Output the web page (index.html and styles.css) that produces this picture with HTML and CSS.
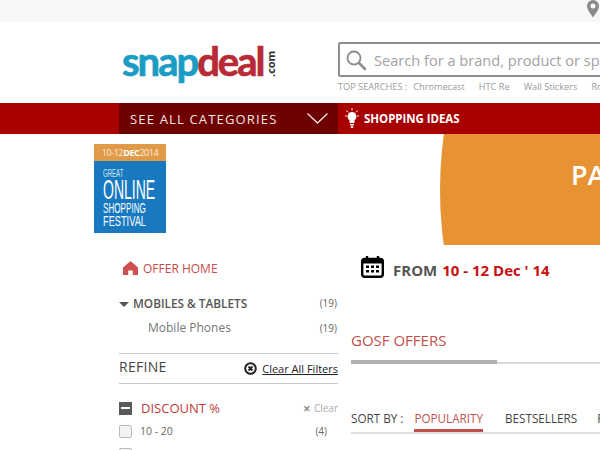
FILE: index.html
```html
<!DOCTYPE html>
<html lang="en">
<head>
    <meta charset="UTF-8">
    <title>Snapdeal GOSF Offers</title>
    <link rel="stylesheet" href="styles.css">
</head>
<body>
    <div class="top-bar">
        <svg class="pin" width="14" height="18" viewBox="0 0 14 18"><path fill="#8a8a8a" fill-rule="evenodd" d="M7 0a6 6 0 0 1 6 6c0 4-4 8-6 11.500C5 14 1 10 1 6a6 6 0 0 1 6-6zm0 3.500a2.500 2.500 0 1 0 0 5 2.500 2.500 0 0 0 0-5z"/></svg>
    </div>

    <div class="header">
        <div class="logo">
            <span class="logo-snap">snap</span><span class="logo-deal">deal</span><span class="logo-com">.com</span>
        </div>
        <div class="search">
            <div class="search-box">
                <svg width="22" height="22" viewBox="0 0 22 22"><circle cx="9" cy="9" r="6.500" fill="none" stroke="#8c8c8c" stroke-width="1.800"/><path d="M14 14l6 6" stroke="#8c8c8c" stroke-width="2.600" stroke-linecap="round"/></svg>
                <span class="search-text">Search for a brand, product or specific item</span>
            </div>
            <div class="top-searches">
                <span class="ts-label">TOP SEARCHES :</span>
                <span>Chromecast</span>
                <span>HTC Re</span>
                <span>Wall Stickers</span>
                <span>Ro</span>
            </div>
        </div>
    </div>

    <div class="nav">
        <div class="categories">
            <span>SEE ALL CATEGORIES</span>
            <svg width="21" height="11" viewBox="0 0 21 11"><path d="M.5.500l10 9.500 10-9.500" fill="none" stroke="#f3e3e3" stroke-width="1.300"/></svg>
        </div>
        <div class="ideas">
            <svg width="14" height="22" viewBox="0 0 14 22"><path fill="#fff" d="M7 4a4.500 4.500 0 0 1 2.500 8.200V15h-5v-2.800A4.500 4.500 0 0 1 7 4zM5 16h4v1.500H5zM5.800 18.300h2.400V20H5.800z"/><path d="M7 0v2.500M1.500 2.500l1.500 1.800M12.500 2.500L11 4.300M0 8h1.800M12.200 8H14" stroke="#fff" stroke-width="1"/></svg>
            <span>SHOPPING IDEAS</span>
        </div>
    </div>

    <div class="main">
        <div class="sidebar">
            <div class="gosf-badge">
                <div class="gosf-date">10-12<b>DEC</b>2014</div>
                <div class="gosf-name">
                    <div class="gosf-great">GREAT</div>
                    <div class="gosf-online">ONLINE</div>
                    <div class="gosf-shopping">SHOPPING</div>
                    <div class="gosf-festival">FESTIVAL</div>
                </div>
            </div>

            <div class="side-inner">
                <div class="offer-home">
                    <svg width="15" height="14" viewBox="0 0 15 14"><path fill="#cf5050" d="M7.500 0L15 6.500V14H9.800V9.500H5.200V14H0V6.500z"/></svg>
                    <span>OFFER HOME</span>
                </div>

                <div class="cat-row cat-main">
                    <span><i class="caret"></i>MOBILES &amp; TABLETS</span>
                    <span class="count">(19)</span>
                </div>
                <div class="cat-row cat-sub">
                    <span>Mobile Phones</span>
                    <span class="count">(19)</span>
                </div>

                <div class="refine">
                    <span class="refine-title">REFINE</span>
                    <span class="clear-all">
                        <svg width="13" height="13" viewBox="0 0 13 13"><circle cx="6.500" cy="6.500" r="5.300" fill="none" stroke="#222" stroke-width="2"/><path d="M4.500 4.500l4 4M8.500 4.500l-4 4" stroke="#222" stroke-width="1.800"/></svg>
                        <u>Clear All Filters</u>
                    </span>
                </div>

                <div class="filter-head">
                    <i class="minus-box"></i>
                    <span class="filter-name">DISCOUNT %</span>
                    <span class="filter-clear"><b>✕</b> Clear</span>
                </div>
                <div class="filter-row">
                    <i class="check"></i>
                    <span>10 - 20</span>
                    <span class="filter-count">(4)</span>
                </div>
                <div class="filter-row">
                    <i class="check"></i>
                </div>
            </div>
        </div>

        <div class="content">
            <div class="banner">
                <div class="banner-circle"><span>PA</span></div>
            </div>

            <div class="from">
                <svg width="23" height="22" viewBox="0 0 23 22"><rect x="1.200" y="3" width="20.600" height="17.800" rx="2.500" fill="none" stroke="#000" stroke-width="2.400"/><path d="M1 4h21v3.500H1z" fill="#000"/><path d="M6 .500v4M17 .500v4" stroke="#000" stroke-width="2.400" stroke-linecap="round"/><path fill="#000" d="M5 9.500h3v2.500H5zM10 9.500h3v2.500h-3zM15 9.500h3v2.500h-3zM5 14h3v2.500H5zM10 14h3v2.500h-3zM15 14h3v2.500h-3z"/></svg>
                <span class="from-label">FROM</span>
                <span class="from-date">10 - 12 Dec ' 14</span>
            </div>

            <div class="tabs">
                <div class="tab-active">GOSF OFFERS</div>
            </div>

            <div class="sort">
                <span class="sort-label">SORT BY :</span>
                <span class="sort-item sort-active">POPULARITY</span>
                <span class="sort-item">BESTSELLERS</span>
                <span class="sort-item">PRICE</span>
            </div>
        </div>
    </div>
</body>
</html>
```
FILE: styles.css
```css
html, body {
    margin: 0;
    height: 450px;
    overflow: hidden;
}
body {
    width: 600px;
    font-family: "Open Sans", sans-serif;
    background-color: #fff;
}
.top-bar {
    height: 22px;
    background-color: #f7f7f7;
    display: flex;
    justify-content: flex-end;
    padding-right: 1px;
    overflow: hidden;
}
.top-bar svg {
    margin-right: -1px;
    flex: none;
}
.header {
    height: 81px;
    display: flex;
    overflow: hidden;
}
.logo {
    width: 338px;
    padding: 16px 0 0 122px;
    box-sizing: border-box;
    flex: none;
    white-space: nowrap;
    font-family: "Lato", sans-serif;
    font-weight: 700;
    font-size: 40px;
    line-height: 46px;
    letter-spacing: -2px;
    display: flex;
    -webkit-text-stroke: 0.7px;
}
.logo-snap {
    color: #1a9cc4;
}
.logo-deal {
    color: #b82a35;
}
.logo-com {
    writing-mode: vertical-rl;
    transform: rotate(180deg);
    font-size: 11px;
    line-height: 11px;
    letter-spacing: 0;
    font-family: "Open Sans", sans-serif;
    font-weight: 700;
    color: #333;
    height: 36px;
    margin: 3px 0 0 2px;
    text-align: left;
    -webkit-text-stroke: 0;
}
.search {
    flex: none;
    width: 400px;
    padding-top: 20px;
}
.search-box {
    width: 400px;
    height: 35px;
    box-sizing: border-box;
    border: 2px solid #8e8e8e;
    border-radius: 2px;
    display: flex;
    align-items: center;
    padding-left: 5px;
    white-space: nowrap;
    overflow: hidden;
}
.search-text {
    margin-left: 7px;
    font-size: 14.600px;
    color: #a2a2a2;
}
.top-searches {
    margin-top: 4px;
    font-size: 9.200px;
    line-height: 12px;
    color: #9b9b9b;
    white-space: nowrap;
    display: flex;
    gap: 14px;
}
.ts-label {
    margin-right: -8px;
}
.nav {
    height: 31px;
    background-color: #a80000;
    padding-left: 119px;
    display: flex;
}
.categories {
    width: 219px;
    box-sizing: border-box;
    background-color: #6f0000;
    color: #f6e6e6;
    font-size: 13px;
    font-weight: 500;
    letter-spacing: 1.170px;
    padding: 0 10px 0 11px;
    display: flex;
    align-items: center;
    justify-content: space-between;
}
.ideas {
    display: flex;
    align-items: center;
    gap: 5px;
    padding-left: 7px;
    color: #fff;
    font-size: 11.500px;
    font-weight: 700;
    letter-spacing: -0.05px;
}
.main {
    display: flex;
    height: 316px;
    overflow: hidden;
}
.sidebar {
    width: 338px;
    flex: none;
    box-sizing: border-box;
    padding: 10px 0 0 94px;
}
.gosf-badge {
    width: 72px;
    height: 89px;
    background-color: #1878c0;
    color: #fff;
    overflow: hidden;
}
.gosf-date {
    height: 17px;
    background-color: #e09a48;
    font-size: 9px;
    line-height: 17px;
    text-align: center;
    letter-spacing: -0.4px;
    color: #fbeedd;
}
.gosf-date b {
    color: #fff;
}
.gosf-name {
    padding: 7px 0 0 9px;
    font-family: "Liberation Sans", sans-serif;
    white-space: nowrap;
}
.gosf-great {
    font-size: 11px;
    line-height: 11px;
    transform: scaleX(0.55);
    transform-origin: left;
    color: #cfe4f4;
}
.gosf-online {
    font-size: 28px;
    line-height: 22px;
    transform: scaleX(0.5);
    transform-origin: left;
}
.gosf-shopping {
    font-size: 14px;
    line-height: 13px;
    margin-top: 1px;
    transform: scaleX(0.58);
    transform-origin: left;
}
.gosf-festival {
    font-size: 14px;
    line-height: 13px;
    transform: scaleX(0.66);
    transform-origin: left;
}
.side-inner {
    width: 219px;
    margin-left: 25px;
}
.offer-home {
    margin-top: 27px;
    display: flex;
    align-items: center;
    gap: 5px;
    padding-left: 4px;
    height: 16px;
    font-size: 12px;
    color: #c84a4a;
}
.cat-row {
    display: flex;
    justify-content: space-between;
    padding-right: 1px;
    color: #666;
}
.cat-main {
    margin-top: 19px;
    font-size: 11.800px;
    font-weight: 600;
    line-height: 16px;
    color: #555;
}
.cat-sub {
    margin-top: 9px;
    padding-left: 29px;
    font-size: 12px;
    line-height: 16px;
    color: #777;
}
.count {
    font-size: 10px;
    font-weight: 400;
    color: #666;
}
.caret {
    display: inline-block;
    border-left: 5px solid transparent;
    border-right: 5px solid transparent;
    border-top: 5px solid #555;
    margin-right: 4px;
    vertical-align: 1px;
}
.refine {
    margin-top: 17px;
    height: 29px;
    border-top: 1px solid #c8c8c8;
    border-bottom: 1px solid #c8c8c8;
    display: flex;
    justify-content: space-between;
    align-items: center;
}
.refine-title {
    font-size: 14px;
    letter-spacing: 0.3px;
    color: #444;
    padding-bottom: 4px;
}
.clear-all {
    display: flex;
    align-items: center;
    gap: 5px;
    font-size: 11px;
    color: #222;
    white-space: nowrap;
}
.filter-head {
    margin-top: 15px;
    display: flex;
    align-items: center;
    height: 18px;
}
.minus-box {
    width: 13px;
    height: 13px;
    background-color: #5a5a5a;
    position: relative;
}
.minus-box::after {
    content: "";
    position: absolute;
    left: 2px;
    right: 2px;
    top: 5px;
    height: 2px;
    background-color: #fff;
}
.filter-name {
    margin-left: 9px;
    font-size: 13px;
    color: #c03a3a;
}
.filter-clear {
    margin-left: auto;
    font-size: 10px;
    color: #aaa;
    white-space: nowrap;
}
.filter-clear b {
    color: #888;
    font-size: 9px;
}
.filter-row {
    display: flex;
    align-items: center;
    height: 18px;
    margin-top: 5px;
    font-size: 10.500px;
    color: #666;
}
.check {
    width: 11px;
    height: 11px;
    border: 1px solid #bbb;
    border-radius: 2px;
    background-color: #f3f3f3;
    margin-right: 8px;
}
.filter-count {
    margin-left: auto;
    margin-right: 11px;
    font-size: 10px;
}
.content {
    width: 262px;
    flex: none;
    overflow: hidden;
}
.banner {
    height: 111px;
    overflow: hidden;
}
.banner-circle {
    width: 800px;
    height: 800px;
    margin: -344px 0 0 102px;
    border-radius: 50%;
    background-color: #e79233;
    color: #fff;
    font-size: 27px;
    font-weight: 600;
    box-sizing: border-box;
    padding: 367px 0 0 131px;
    line-height: 36px;
}
.from {
    margin: 11px 0 0 23px;
    display: flex;
    align-items: center;
    height: 28px;
    font-size: 15px;
    font-weight: 700;
    white-space: nowrap;
}
.from svg {
    margin-bottom: 6px;
}
.from-label {
    margin-left: 9px;
    color: #555;
}
.from-date {
    margin-left: 5px;
    color: #c81010;
}
.tabs {
    margin: 45px 0 0 13px;
    border-bottom: 2px solid #d8d8d8;
    height: 33px;
}
.tab-active {
    width: 146px;
    height: 31px;
    border-bottom: 4px solid #b0b0b0;
    font-size: 15px;
    line-height: 22px;
    color: #c0504d;
}
.sort {
    margin: 44px 0 0 13px;
    display: flex;
    align-items: flex-start;
    border-bottom: 2px solid #e0e0e0;
    height: 24px;
    font-size: 11.700px;
    line-height: 21px;
    color: #444;
    white-space: nowrap;
}
.sort-label {
    margin-right: 11px;
}
.sort-item {
    margin-right: 20px;
}
.sort-active {
    margin-right: 22px;
    color: #c0504d;
    border-bottom: 3px solid #c0504d;
}
```
